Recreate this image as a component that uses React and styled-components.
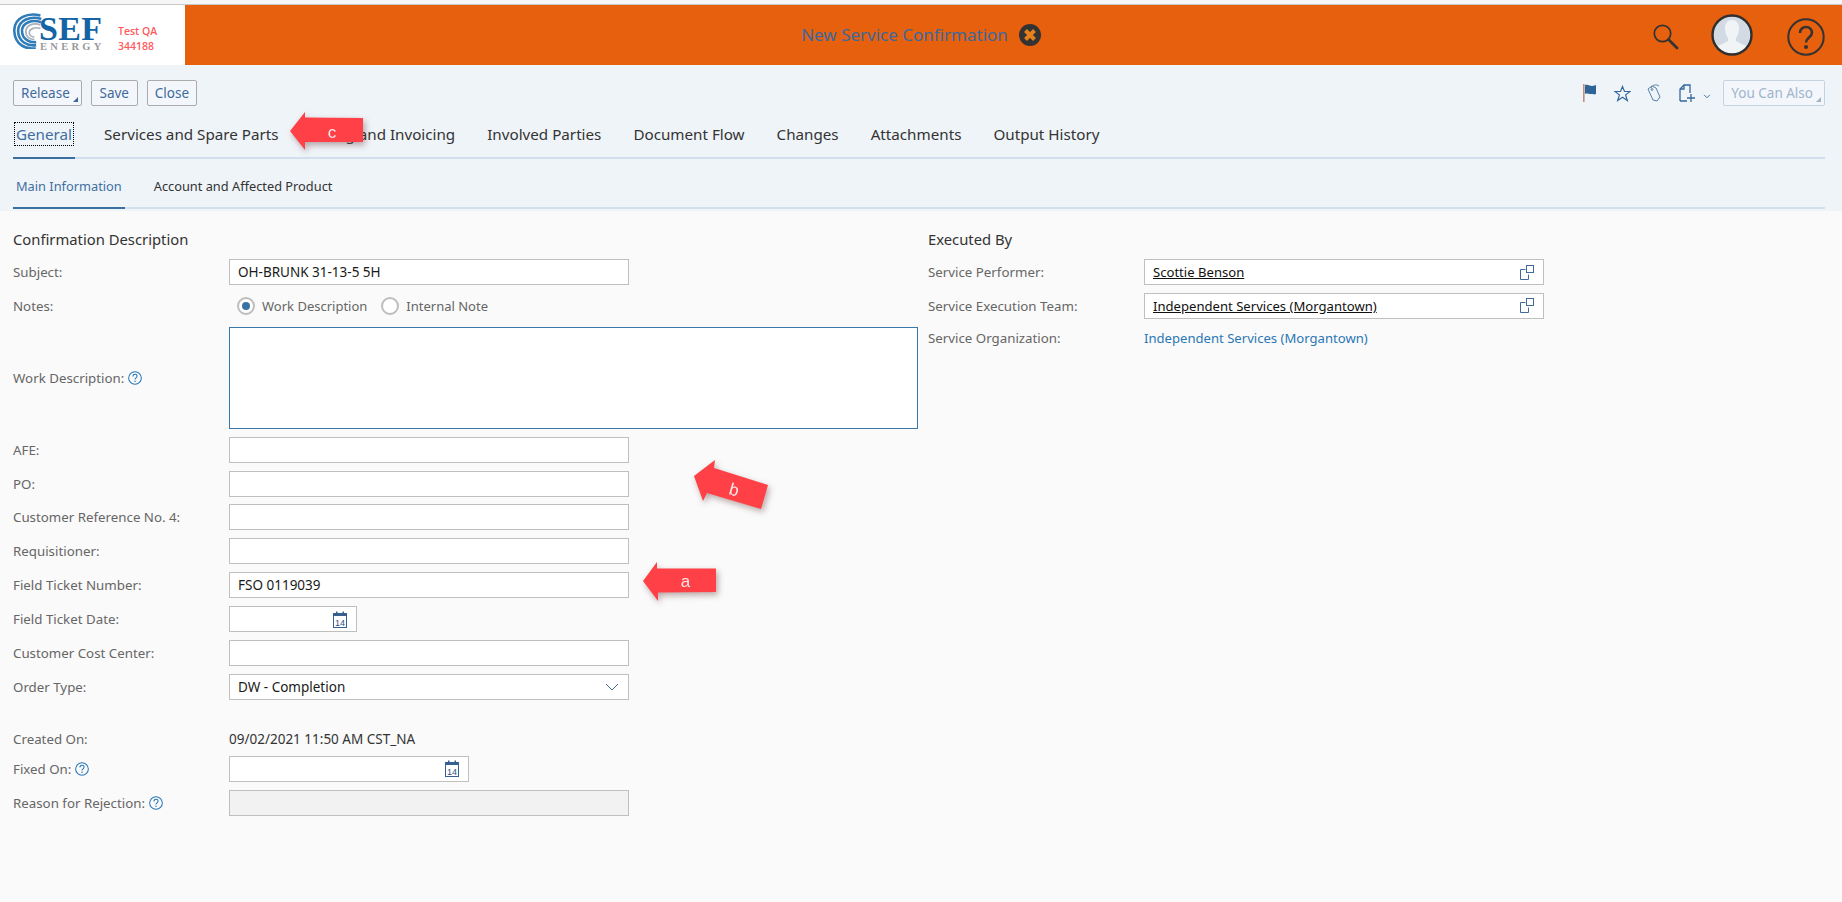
import React from 'react';
import styled, {createGlobalStyle} from 'styled-components';

const GlobalStyle = createGlobalStyle`
  html, body {
    margin: 0;
    padding: 0;
    background: #fafafa;
    font-family: "Noto Sans", "Open Sans", Arial, sans-serif;
    overflow: hidden;
  }
  * {
    box-sizing: border-box;
  }
`;

const Page = styled.div`
  position: relative;
  height: 902px;
  background: #fafafa;
`;

const TopStrip = styled.div`
  height: 5px;
  background: #f6f6f6;
  border-bottom: 1px solid #c9c9c9;
`;

/* shell bar */
const ShellBar = styled.header`
  height: 60px;
  display: grid;
  grid-template-columns: 1fr auto 1fr;
  align-items: center;
  background: #e6600d;
`;

const LogoBox = styled.div`
  width: 185px;
  height: 60px;
  background: #fff;
  display: flex;
  align-items: center;
  justify-self: start;
`;

const Logo = styled.div`
  position: relative;
  width: 101px;
  height: 40px;
  margin-left: 13px;
  margin-top: 2px;
  flex: none;
`;

const Swirl = styled.svg`
  position: absolute;
  left: 0;
  top: -3px;
`;

const LogoName = styled.div`
  position: absolute;
  left: 26px;
  top: 0;
  font-family: "Liberation Serif", serif;
  font-weight: 700;
  font-size: 34px;
  line-height: 25px;
  letter-spacing: 0.3px;
  color: #1464a5;
`;

const LogoSub = styled.div`
  position: absolute;
  left: 27px;
  top: 25px;
  font-family: "Liberation Serif", serif;
  font-weight: 700;
  font-size: 10.5px;
  line-height: 12px;
  letter-spacing: 3.3px;
  color: #999;
`;

const TestInfo = styled.div`
  margin-left: 4px;
  margin-top: 7px;
  font-family: "Open Sans", sans-serif;
  font-weight: 600;
  font-size: 10.5px;
  line-height: 15px;
  color: #ff5a60;
`;

const TitleWrap = styled.div`
  display: flex;
  align-items: center;
  gap: 11px;
  margin-top: -1px;
`;

const Title = styled.div`
  font-size: 17px;
  color: #3b689f;
`;

const ShellActions = styled.div`
  display: flex;
  align-items: center;
  justify-self: end;
  padding-right: 17px;
`;

const ActionSlot = styled.div`
  display: flex;
  margin-left: ${p => p.$ml}px;
  margin-top: ${p => p.$mt || 0}px;
`;

/* object header */
const ObjectHeader = styled.div`
  height: 146px;
  padding: 15px 17px 0 13px;
  background: #eff4f9;
`;

const Toolbar = styled.div`
  display: flex;
  align-items: center;
  justify-content: space-between;
`;

const ButtonGroup = styled.div`
  display: flex;
  align-items: center;
  gap: 9px;
`;

const Button = styled.div`
  position: relative;
  height: 26px;
  min-width: 47px;
  padding: 0 ${p => (p.$menu ? '11px' : '7px')} 0 7px;
  display: flex;
  align-items: center;
  justify-content: center;
  border: 1px solid ${p => (p.$dim ? '#c5d2e0' : '#ababab')};
  border-radius: 2px;
  font-size: 13.5px;
  color: ${p => (p.$dim ? '#a0b4cb' : '#3f6a9a')};
  background: #f3f7fb;
  &::after {
    content: '';
    display: ${p => (p.$menu ? 'block' : 'none')};
    position: absolute;
    right: 3px;
    bottom: 3px;
    border-style: solid;
    border-width: 0 0 5px 5px;
    border-color: transparent transparent ${p => (p.$dim ? '#a0b4cb' : '#3f6a9a')} transparent;
  }
`;

const ToolIcons = styled.div`
  display: flex;
  align-items: center;
`;

const ToolIcon = styled.svg`
  display: block;
  margin-right: ${p => p.$mr}px;
  margin-top: ${p => p.$mt || 0}px;
`;

const TabStrip = styled.div`
  display: flex;
  gap: ${p => p.$gap}px;
  height: ${p => p.$h}px;
  border-bottom: 2px solid #d1dfef;
`;

const Tab = styled.div`
  position: relative;
  height: ${p => p.$h}px;
  padding: ${p => p.$pt}px 3px 0;
  display: flex;
  align-items: center;
  font-size: ${p => p.$size}px;
  color: ${p => (p.$active ? '#3f6f9f' : '#333')};
  white-space: nowrap;
  border-bottom: 2px solid ${p => (p.$active ? '#3a6f9f' : 'transparent')};
`;

const Focus = styled.span`
  outline: 1px dotted #000;
  outline-offset: 1px;
`;

/* form */
const Columns = styled.main`
  display: flex;
  gap: 10px;
  padding: 20px 0 0 13px;
`;

const Column = styled.section`
  width: ${p => p.$w}px;
  flex: none;
`;

const Heading = styled.h2`
  margin: 0 0 11px;
  height: 17px;
  line-height: 17px;
  font-size: 14.8px;
  font-weight: 400;
  color: #333;
`;

const Row = styled.div`
  display: flex;
  align-items: center;
  min-height: ${p => p.$h || 26}px;
  margin-bottom: 7.9px;
  margin-top: ${p => p.$mt || 0}px;
`;

const Label = styled.div`
  width: 216px;
  flex: none;
  display: flex;
  align-items: center;
  gap: 4px;
  font-size: 13.3px;
  color: #666;
`;

const Field = styled.div`
  width: ${p => p.$w}px;
  height: 26px;
  display: flex;
  align-items: center;
  padding: 0 9px 0 8px;
  border: 1px solid #bfbfbf;
  background: ${p => (p.$disabled ? '#f2f2f2' : '#fff')};
`;

const Input = styled.input`
  flex: 1;
  min-width: 0;
  height: 100%;
  padding: 0;
  border: 0;
  outline: 0;
  background: transparent;
  font-family: inherit;
  font-size: 13.5px;
  color: #1a1a1a;
`;

const TextArea = styled.textarea`
  display: block;
  width: 689px;
  height: 102px;
  padding: 6px 8px;
  border: 1px solid #3a77ad;
  outline: 0;
  resize: none;
  background: #fff;
  font-family: inherit;
`;

const LinkValue = styled.span`
  flex: 1;
  font-size: 13.1px;
  color: #111;
  text-decoration: underline;
  white-space: nowrap;
`;

const PlainValue = styled.span`
  font-size: 13.5px;
  color: #333;
`;

const BlueValue = styled.a`
  font-size: 13.1px;
  color: #2a77b5;
`;

const RadioGroup = styled.div`
  display: flex;
  align-items: center;
  padding-left: 8px;
`;

const RadioDot = styled.span`
  width: 18px;
  height: 18px;
  margin-right: 7px;
  margin-left: ${p => p.$ml || 0}px;
  flex: none;
  border: 2px solid #bdbdbd;
  border-radius: 50%;
  background: #fff;
  display: flex;
  align-items: center;
  justify-content: center;
  &::after {
    content: '';
    display: ${p => (p.$on ? 'block' : 'none')};
    width: 8px;
    height: 8px;
    border-radius: 50%;
    background: #3a72a6;
  }
`;

const RadioText = styled.span`
  font-size: 13px;
  color: #666;
`;

const Arrow = styled.svg`
  position: absolute;
  left: ${p => p.$x}px;
  top: ${p => p.$y}px;
  overflow: visible;
  filter: drop-shadow(2px 3px 3px rgba(90, 40, 40, 0.4));
`;

const ArrowLetter = styled.text`
  fill: #ffe9e9;
  font-family: "Liberation Sans", sans-serif;
  font-size: 17px;
`;

const SwirlMark = () => (
  <Swirl width="36" height="36" viewBox="0 0 42 42" fill="none">
    <g stroke="#2f7cb8" strokeWidth="3">
      <path d="M32 3C18 -1 1 5 1.500 21s14 22 25 20" />
      <path d="M33 7C21 3 6 8 6 21s12 18 21 16.500" />
      <path d="M33 11C23 7 10.500 11 10.500 21s10 14 16.500 13" />
    </g>
    <g stroke="#a9b2ba" strokeWidth="2">
      <path d="M32 14c-8-3-17 0-17 8 0 6 5 9 10 9" />
      <path d="M32 18c-6-2-13 0-13 5 0 3 3 5 6 5" />
    </g>
  </Swirl>
);

const SearchIcon = () => (
  <svg width="26" height="26" viewBox="0 0 26 26" fill="none" stroke="#333">
    <circle cx="9.500" cy="9.500" r="8.200" strokeWidth="1.700" />
    <path d="M15.500 15.500l8.500 8.500" strokeWidth="2.800" strokeLinecap="round" />
  </svg>
);

const AvatarIcon = () => (
  <svg width="42" height="42" viewBox="0 0 42 42">
    <defs>
      <clipPath id="avatar-clip">
        <circle cx="21" cy="21" r="19" />
      </clipPath>
    </defs>
    <circle cx="21" cy="21" r="19" fill="#d2dbe3" />
    <g clipPath="url(#avatar-clip)" fill="#f1f4f7">
      <path d="M14 14c0-5 3-8 7-8s7 3 7 8c0 4-1 7-3 10v3l10 5v10H7V32l10-5v-3c-2-3-3-6-3-10z" />
    </g>
    <circle cx="21" cy="21" r="19.500" fill="none" stroke="#2f2f2f" strokeWidth="2.400" />
  </svg>
);

const HelpIcon = () => (
  <svg width="38" height="38" viewBox="0 0 38 38" fill="none" stroke="#333">
    <circle cx="19" cy="19" r="17.700" strokeWidth="2" />
    <path d="M13 15c0-4 3-6 6-6 4 0 6 3 6 5.500 0 5-6 5-6 10" strokeWidth="2.600" />
    <circle cx="19" cy="29" r="2" fill="#333" stroke="none" />
  </svg>
);

const CloseCircle = () => (
  <svg width="22" height="22" viewBox="0 0 22 22">
    <circle cx="11" cy="11" r="11" fill="#333" />
    <path d="M6.500 6.500l9 9M15.500 6.500l-9 9" stroke="#e6801d" strokeWidth="4" />
  </svg>
);

const FlagIcon = () => (
  <ToolIcon $mr={17} width="14" height="18" viewBox="0 0 14 18">
    <rect x="0" y="0" width="1.600" height="18" fill="#c98a80" />
    <path d="M2 1c3-1 5 1 7 1 2 0 3-1 4-1v9c-2 1-3 0-5 0-3 0-4-1-6 0z" fill="#2f6496" />
  </ToolIcon>
);

const StarIcon = () => (
  <ToolIcon $mr={16} width="17" height="17" viewBox="0 0 17 17" fill="none" stroke="#35689c" strokeWidth="1.200">
    <path d="M8.500 1.500l2 5h5.500l-4.400 3.400 1.700 5.600-4.800-3.300-4.800 3.300 1.700-5.600L1 6.500h5.500z" />
  </ToolIcon>
);

const TagIcon = () => (
  <ToolIcon $mr={18} width="14" height="18" viewBox="0 0 14 18" fill="none" stroke="#5a7fa8" strokeWidth="1">
    <path d="M1 5l4-3 4 2 4 9-3 4-4-1z" />
    <path d="M4 4C5 1 9 0 12 2" />
    <circle cx="5" cy="5.500" r="0.900" />
  </ToolIcon>
);

const NewDocIcon = () => (
  <ToolIcon $mr={8} width="16" height="18" viewBox="0 0 16 18" fill="none" stroke="#35689c" strokeWidth="1.300">
    <path d="M1 17V5l4-4h6v8M1 17h7" />
    <path d="M1 5h4V1M8 14h8M12 10v8" />
  </ToolIcon>
);

const ChevronSmall = () => (
  <ToolIcon $mr={12} $mt={7} width="8" height="5" viewBox="0 0 9 6" fill="none" stroke="#35689c" strokeWidth="1.100">
    <path d="M1 1l3.500 3.500L8 1" />
  </ToolIcon>
);

const QuestionMark = () => (
  <svg width="14" height="14" viewBox="0 0 15 15" fill="none" stroke="#2a77b5">
    <circle cx="7.500" cy="7.500" r="6.800" strokeWidth="1.100" />
    <path d="M5.300 5.800c0-1.500 1-2.300 2.200-2.300 1.300 0 2.200.8 2.200 2 0 1.800-2.200 1.800-2.200 3.600" strokeWidth="1.100" />
    <circle cx="7.500" cy="11" r="0.800" fill="#2a77b5" stroke="none" />
  </svg>
);

const CalendarIcon = () => (
  <svg width="14" height="17" viewBox="0 0 14 17">
    <rect x="0.500" y="2.500" width="13" height="14" fill="#fff" stroke="#35608f" />
    <rect x="0" y="2" width="14" height="3" fill="#35608f" />
    <rect x="3" y="0.500" width="1.500" height="2.500" fill="#35608f" />
    <rect x="9.500" y="0.500" width="1.500" height="2.500" fill="#35608f" />
    <text x="7" y="14.500" textAnchor="middle" fontSize="9" fontFamily="Liberation Sans, sans-serif" fill="#2f4f78">14</text>
  </svg>
);

const CopyIcon = () => (
  <svg width="14" height="15" viewBox="0 0 14 15" fill="none" stroke="#3f6a9a" strokeWidth="1">
    <path d="M5.500 4.500h-5v10h8v-5" />
    <rect x="6.500" y="0.500" width="7" height="7" />
  </svg>
);

const SelectChevron = () => (
  <svg width="14" height="8" viewBox="0 0 14 8" fill="none" stroke="#3f6a9a" strokeWidth="1">
    <path d="M1 1l6 6 6-6" />
  </svg>
);

const mainTabs = [
  'General',
  'Services and Spare Parts',
  'Billing and Invoicing',
  'Involved Parties',
  'Document Flow',
  'Changes',
  'Attachments',
  'Output History',
];

const emptyRows = ['AFE:', 'PO:', 'Customer Reference No. 4:', 'Requisitioner:'];

const App = () => {
  return (
    <Page>
      <GlobalStyle />
      <TopStrip />
      <ShellBar>
        <LogoBox>
          <Logo>
            <SwirlMark />
            <LogoName>SEF</LogoName>
            <LogoSub>ENERGY</LogoSub>
          </Logo>
          <TestInfo>
            <div>Test QA</div>
            <div>344188</div>
          </TestInfo>
        </LogoBox>
        <TitleWrap>
          <Title>New Service Confirmation</Title>
          <CloseCircle />
        </TitleWrap>
        <ShellActions>
          <ActionSlot $ml={0} $mt={3}><SearchIcon /></ActionSlot>
          <ActionSlot $ml={32}><AvatarIcon /></ActionSlot>
          <ActionSlot $ml={34} $mt={3}><HelpIcon /></ActionSlot>
        </ShellActions>
      </ShellBar>

      <ObjectHeader>
        <Toolbar>
          <ButtonGroup>
            <Button $menu>Release</Button>
            <Button>Save</Button>
            <Button>Close</Button>
          </ButtonGroup>
          <ToolIcons>
            <FlagIcon />
            <StarIcon />
            <TagIcon />
            <NewDocIcon />
            <ChevronSmall />
            <Button $menu $dim>You Can Also</Button>
          </ToolIcons>
        </Toolbar>
        <TabStrip $gap={26} $h={53}>
          {mainTabs.map((name, i) => (
            <Tab key={name} $h={53} $pt={4} $size={15.2} $active={i === 0}>
              {i === 0 ? <Focus>{name}</Focus> : name}
            </Tab>
          ))}
        </TabStrip>
        <TabStrip $gap={26} $h={50}>
          <Tab $h={50} $pt={5} $size={12.8} $active>Main Information</Tab>
          <Tab $h={50} $pt={5} $size={12.8}>Account and Affected Product</Tab>
        </TabStrip>
      </ObjectHeader>

      <Columns>
        <Column $w={905}>
          <Heading>Confirmation Description</Heading>
          <Row>
            <Label>Subject:</Label>
            <Field $w={400}><Input readOnly value="OH-BRUNK 31-13-5 5H" /></Field>
          </Row>
          <Row>
            <Label>Notes:</Label>
            <RadioGroup>
              <RadioDot $on />
              <RadioText>Work Description</RadioText>
              <RadioDot $ml={14} />
              <RadioText>Internal Note</RadioText>
            </RadioGroup>
          </Row>
          <Row>
            <Label>Work Description: <QuestionMark /></Label>
            <TextArea readOnly />
          </Row>
          {emptyRows.map(name => (
            <Row key={name}>
              <Label>{name}</Label>
              <Field $w={400}><Input readOnly /></Field>
            </Row>
          ))}
          <Row>
            <Label>Field Ticket Number:</Label>
            <Field $w={400}><Input readOnly value="FSO 0119039" /></Field>
          </Row>
          <Row>
            <Label>Field Ticket Date:</Label>
            <Field $w={128}><Input readOnly /><CalendarIcon /></Field>
          </Row>
          <Row>
            <Label>Customer Cost Center:</Label>
            <Field $w={400}><Input readOnly /></Field>
          </Row>
          <Row>
            <Label>Order Type:</Label>
            <Field $w={400}><Input readOnly value="DW - Completion" /><SelectChevron /></Field>
          </Row>
          <Row $h={18} $mt={30}>
            <Label>Created On:</Label>
            <PlainValue>09/02/2021 11:50 AM CST_NA</PlainValue>
          </Row>
          <Row>
            <Label>Fixed On: <QuestionMark /></Label>
            <Field $w={240}><Input readOnly /><CalendarIcon /></Field>
          </Row>
          <Row>
            <Label>Reason for Rejection: <QuestionMark /></Label>
            <Field $w={400} $disabled />
          </Row>
        </Column>

        <Column $w={620}>
          <Heading>Executed By</Heading>
          <Row>
            <Label>Service Performer:</Label>
            <Field $w={400}><LinkValue>Scottie Benson</LinkValue><CopyIcon /></Field>
          </Row>
          <Row>
            <Label>Service Execution Team:</Label>
            <Field $w={400}><LinkValue>Independent Services (Morgantown)</LinkValue><CopyIcon /></Field>
          </Row>
          <Row $h={23}>
            <Label>Service Organization:</Label>
            <BlueValue>Independent Services (Morgantown)</BlueValue>
          </Row>
        </Column>
      </Columns>

      <Arrow $x={290} $y={112} width="73" height="38" viewBox="0 0 73 38">
        <path d="M0 19L15 0V5.500L73 6V30H15V38z" fill="#ff4046" />
        <ArrowLetter x="42" y="25.500" textAnchor="middle">c</ArrowLetter>
      </Arrow>
      <Arrow $x={694} $y={460} width="74" height="49" viewBox="0 0 74 49">
        <path d="M0 16L21 0L20 8L74 25L67 49L13 33L9 41z" fill="#ff4046" />
        <ArrowLetter x="40" y="35.500" textAnchor="middle" transform="rotate(16 40 30)">b</ArrowLetter>
      </Arrow>
      <Arrow $x={643} $y={562} width="73" height="39" viewBox="0 0 73 39">
        <path d="M0 19L14 0V6.500H73V30L15 30.500V39z" fill="#ff4046" />
        <ArrowLetter x="42.500" y="25" textAnchor="middle">a</ArrowLetter>
      </Arrow>
    </Page>
  );
};

export default App;
